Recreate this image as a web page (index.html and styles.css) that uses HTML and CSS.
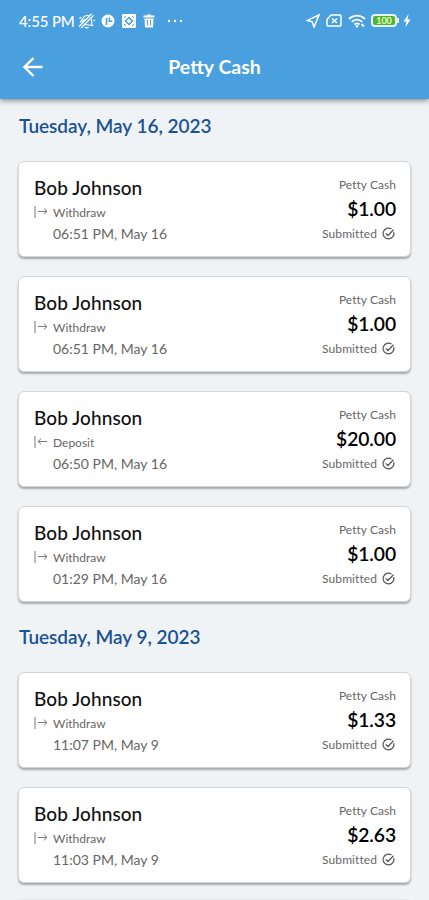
FILE: index.html
```html
<!DOCTYPE html>
<html lang="en">
<head>
	<meta charset="UTF-8">
	<meta name="viewport" content="width=device-width, initial-scale=1">
	<title>Petty Cash</title>
	<link rel="stylesheet" href="styles.css">
</head>
<body>
	<svg class="sprite">
		<symbol id="out" viewBox="0 0 14 14"><path d="M1 1v12M4 6.500h9M10 3.700l3 2.800-3 2.800"/></symbol>
		<symbol id="in" viewBox="0 0 14 14"><path d="M1 1v12M4 6.500h9M7 3.700L4 6.500l3 2.800"/></symbol>
		<symbol id="check" viewBox="0 0 14 14"><path d="M12.600 5.600A5.800 5.800 0 1 1 10.200 2.200M4 6.800l2.400 2.400 6-6.200"/></symbol>
	</svg>
	<div class="header">
		<div class="status">
			<span class="time">4:55 PM</span>
			<svg class="bell" viewBox="0 0 18 16"><path d="M2 9.500C4 8 4 4 7.500 2.800 9 2.300 10.500 2.500 11.500 3M13.500 6c.5 2.500-.5 4.500 1 6.500L7 11.500M7 14c1 1.200 2.500 1.200 3.500.3M1 13.500L13.500 1M3 15L15.500 2.500M1.500 5.500L3 4M15.500 7l1.500.8M4 9l3-3"/></svg>
			<svg class="disc" viewBox="0 0 14 14"><circle cx="7" cy="7" r="6.500" fill="#fff"/><path d="M5.500 11V4M8.300 3.500v3.700h3" fill="none" stroke="#4a9fdf" stroke-width="1.600"/></svg>
			<svg class="tile" viewBox="0 0 14 14"><rect width="14" height="14" rx="1" fill="#fff"/><path d="M7 3.500L10.500 7 7 10.500 3.500 7z" fill="none" stroke="#4a9fdf" stroke-width="1.500"/><path d="M2 4l2-2M12 4l-2-2M2 10l2 2M12 10l-2 2" stroke="#4a9fdf"/></svg>
			<svg class="bin" viewBox="0 0 12 14"><path d="M.5 1.500h3.500V.5h4v1h3.500v2H.5zM1.500 4.500h9L10 13.500H2z" fill="#fff"/><path d="M4.500 6v5.500M7.500 6v5.500" stroke="#4a9fdf" stroke-width="1.100"/></svg>
			<svg class="dots" viewBox="0 0 16 4"><circle cx="1.500" cy="2" r="1.200"/><circle cx="7.500" cy="2" r="1.200"/><circle cx="13.500" cy="2" r="1.200"/></svg>
			<svg class="send" viewBox="0 0 14 14"><path d="M13 1L1 6.500l5.200 1.300L8 13z"/></svg>
			<svg class="sim" viewBox="0 0 16 13"><path d="M5 1h9a1 1 0 0 1 1 1v9a1 1 0 0 1-1 1H2a1 1 0 0 1-1-1V5.500z"/><path d="M6 4.500l5 4.500M11 4.500L6 9"/></svg>
			<svg class="wifi" viewBox="0 0 18 14"><path d="M1 5c4.500-4.500 11.500-4.500 16 0M3.800 7.800c3-3 7.400-3 10.400 0M6.500 10.500c1.500-1.400 3.500-1.400 5 0"/><circle cx="9" cy="12.300" r="1.300" class="dot"/><path d="M13.500 10l2.500 2.500"/></svg>
			<div class="battery">100</div>
			<svg class="bolt" viewBox="0 0 8 13"><path d="M5.500 0L.5 7.500h2.800L2.500 13l5-7.500H4.600z" fill="#fff"/></svg>
		</div>
		<div class="bar">
			<a class="back" href="#"><svg viewBox="0 0 20 20"><path d="M19.500 10H1.500M10.500 1L1.500 10l9 9"/></svg></a>
			<h1>Petty Cash</h1>
		</div>
	</div>
	<div class="list">
		<h2>Tuesday, May 16, 2023</h2>
		<div class="card">
			<div class="left">
				<div class="name">Bob Johnson</div>
				<div class="type"><svg><use href="#out"/></svg>Withdraw</div>
				<div class="date">06:51 PM, May 16</div>
			</div>
			<div class="right">
				<div class="account">Petty Cash</div>
				<div class="amount">$1.00</div>
				<div class="state">Submitted<svg><use href="#check"/></svg></div>
			</div>
		</div>
		<div class="card">
			<div class="left">
				<div class="name">Bob Johnson</div>
				<div class="type"><svg><use href="#out"/></svg>Withdraw</div>
				<div class="date">06:51 PM, May 16</div>
			</div>
			<div class="right">
				<div class="account">Petty Cash</div>
				<div class="amount">$1.00</div>
				<div class="state">Submitted<svg><use href="#check"/></svg></div>
			</div>
		</div>
		<div class="card">
			<div class="left">
				<div class="name">Bob Johnson</div>
				<div class="type"><svg><use href="#in"/></svg>Deposit</div>
				<div class="date">06:50 PM, May 16</div>
			</div>
			<div class="right">
				<div class="account">Petty Cash</div>
				<div class="amount">$20.00</div>
				<div class="state">Submitted<svg><use href="#check"/></svg></div>
			</div>
		</div>
		<div class="card">
			<div class="left">
				<div class="name">Bob Johnson</div>
				<div class="type"><svg><use href="#out"/></svg>Withdraw</div>
				<div class="date">01:29 PM, May 16</div>
			</div>
			<div class="right">
				<div class="account">Petty Cash</div>
				<div class="amount">$1.00</div>
				<div class="state">Submitted<svg><use href="#check"/></svg></div>
			</div>
		</div>
		<h2>Tuesday, May 9, 2023</h2>
		<div class="card">
			<div class="left">
				<div class="name">Bob Johnson</div>
				<div class="type"><svg><use href="#out"/></svg>Withdraw</div>
				<div class="date">11:07 PM, May 9</div>
			</div>
			<div class="right">
				<div class="account">Petty Cash</div>
				<div class="amount">$1.33</div>
				<div class="state">Submitted<svg><use href="#check"/></svg></div>
			</div>
		</div>
		<div class="card">
			<div class="left">
				<div class="name">Bob Johnson</div>
				<div class="type"><svg><use href="#out"/></svg>Withdraw</div>
				<div class="date">11:03 PM, May 9</div>
			</div>
			<div class="right">
				<div class="account">Petty Cash</div>
				<div class="amount">$2.63</div>
				<div class="state">Submitted<svg><use href="#check"/></svg></div>
			</div>
		</div>
		<div class="end"></div>
	</div>
</body>
</html>
```
FILE: styles.css
```css
*{
	margin: 0;
	padding: 0;
	box-sizing: border-box;
}
body{
	height: 900px;
	overflow: hidden;
	background: #eff3f6;
	font-family: Lato, sans-serif;
	color: #111;
}
svg{
	display: block;
	flex: none;
	fill: none;
	stroke: none;
}
.sprite{
	width: 0;
	height: 0;
	position: absolute;
}
.header{
	height: 99px;
	background: #4a9fdf;
	color: #fff;
	box-shadow: 0 2px 5px rgba(0,0,0,.4);
}
.status{
	display: flex;
	align-items: center;
	height: 41px;
	padding: 0 18px 0 19px;
}
.time{
	width: 59px;
	font-size: 15px;
	font-weight: 500;
	letter-spacing: -.15px;
	white-space: nowrap;
}
.bell, .send, .sim, .wifi{
	stroke: #fff;
	stroke-width: 1.5;
}
.bell{
	width: 18px;
	height: 16px;
	stroke-width: 1.2;
}
.disc{
	width: 14px;
	margin-left: 5px;
}
.tile{
	width: 14px;
	margin-left: 7px;
}
.bin{
	width: 12px;
	margin-left: 7px;
}
.dots{
	width: 17px;
	height: 4px;
	margin-left: 12px;
	fill: #fff;
}
.send{
	width: 14px;
	margin-left: auto;
}
.sim{
	width: 16px;
	margin-left: 6px;
}
.wifi{
	width: 18px;
	margin-left: 6px;
	stroke-width: 1.8;
}
.wifi .dot{
	fill: #fff;
	stroke: none;
}
.battery{
	position: relative;
	width: 26px;
	height: 13px;
	margin-left: 5px;
	border: 2px solid #e4f1fb;
	border-radius: 4px;
	background: #4fb52f;
	font-size: 9px;
	font-weight: 700;
	line-height: 9px;
	text-align: center;
	color: #eaffc8;
}
.battery:after{
	content: '';
	position: absolute;
	right: -4px;
	top: 2px;
	width: 2px;
	height: 5px;
	background: #e4f1fb;
}
.bolt{
	width: 8px;
	margin-left: 6px;
}
.bar{
	display: grid;
	grid-template-columns: 60px 1fr 60px;
	align-items: center;
	height: 51px;
}
.back svg{
	width: 20px;
	height: 20px;
	margin-left: 23px;
	stroke: #fff;
	stroke-width: 2.4;
}
h1{
	font-size: 19.5px;
	font-weight: 700;
	text-align: center;
}
.list{
	padding: 0 18px;
}
h2{
	height: 62px;
	padding: 15px 0 0 1px;
	font-size: 19px;
	font-weight: 600;
	line-height: 24px;
	letter-spacing: -.03px;
	color: #1b5294;
}
.card + h2{
	height: 51px;
	padding-top: 4px;
}
.card{
	display: flex;
	justify-content: space-between;
	height: 96px;
	margin-bottom: 19px;
	padding: 13px 14px 0 15px;
	border: 1px solid #d3d6d9;
	border-radius: 6px;
	background: #fff;
	box-shadow: 0 2px 2px rgba(0,0,0,.3);
}
.name{
	font-size: 19px;
	font-weight: 500;
	line-height: 25px;
	letter-spacing: .08px;
}
.type{
	display: flex;
	align-items: center;
	height: 23px;
	padding-top: 1px;
	font-size: 12px;
	color: #666;
}
.type svg{
	width: 14px;
	height: 14px;
	margin-right: 5px;
	stroke: #777;
}
.date{
	padding-left: 19px;
	font-size: 14px;
	line-height: 21px;
	color: #666;
}
.right{
	text-align: right;
}
.account{
	font-size: 12px;
	line-height: 19px;
	letter-spacing: .05px;
	color: #666;
}
.amount{
	font-size: 19.3px;
	font-weight: 600;
	line-height: 29px;
	letter-spacing: -.1px;
	color: #000;
}
.state{
	display: flex;
	align-items: center;
	justify-content: flex-end;
	height: 21px;
	font-size: 12px;
	letter-spacing: .08px;
	color: #666;
}
.state svg{
	width: 13px;
	height: 13px;
	margin: 0 1px 0 5px;
	stroke: #555;
	stroke-width: 1.3;
}
.end{
	height: 4px;
	margin-top: -3px;
	border-radius: 4px 4px 0 0;
	background: #e3e7ea;
}
```
